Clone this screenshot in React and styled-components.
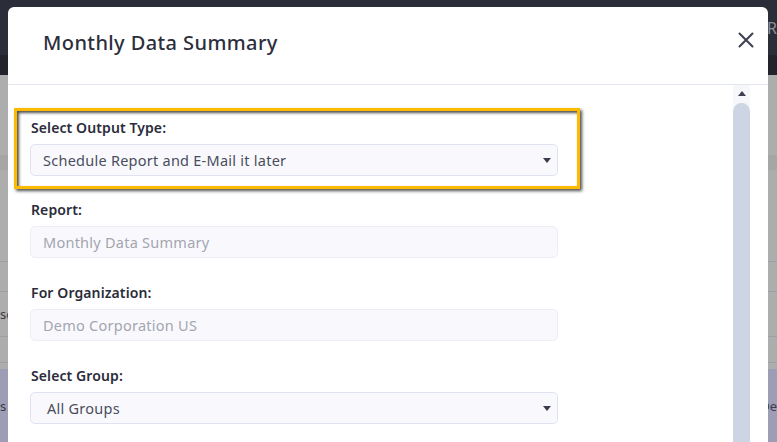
import React from "react";
import styled, { createGlobalStyle } from "styled-components";

const Global = createGlobalStyle`
  html, body { margin: 0; padding: 0; width: 777px; height: 442px; overflow: hidden; }
  body { font-family: "Noto Sans", "Open Sans", sans-serif; }
  * { box-sizing: border-box; }
`;

const Page = styled.div`
  position: relative;
  width: 777px;
  height: 442px;
  overflow: hidden;
  background: #adadad;
  display: flex;
  flex-direction: column;
`;

const TopBar = styled.div`
  height: 75px;
  display: flex;
  flex-direction: column;
  background: #22232b;
`;

const TopBand = styled.div`
  height: 55px;
  background: #2b2d39;
  display: flex;
  justify-content: flex-end;
  align-items: center;
  color: #8d8f9a;
  font-size: 16px;
  font-family: "Noto Sans", sans-serif;
`;

const PageRow = styled.div`
  height: ${(p) => p.h}px;
  background: ${(p) => p.bg || "#adadad"};
  border-bottom: ${(p) => (p.line ? "1px solid #9ea0a8" : "none")};
  display: flex;
  justify-content: space-between;
  align-items: center;
  font-size: 13px;
  color: #3a3b44;
`;

const RowText = styled.span`
  margin-left: ${(p) => p.ml || 0}px;
  margin-right: ${(p) => p.mr || 0}px;
`;

const Modal = styled.div`
  position: absolute;
  left: 8px;
  top: 7px;
  width: 760px;
  height: 460px;
  background: #ffffff;
  border-radius: 6px 6px 0 0;
  display: flex;
  flex-direction: column;
`;

const Header = styled.div`
  height: 78px;
  flex-shrink: 0;
  border-bottom: 1px solid #e3e7ef;
  display: flex;
  align-items: center;
  justify-content: space-between;
  padding: 0 11px 0 35px;
`;

const Title = styled.h2`
  margin: 0;
  margin-top: -6px;
  font-family: "Noto Sans", sans-serif;
  font-weight: 500;
  font-size: 20px;
  color: #2c2e3c;
  letter-spacing: 0.4px;
`;

const CloseButton = styled.button`
  border: 0;
  background: none;
  padding: 0;
  width: 22px;
  height: 22px;
  display: flex;
  align-items: center;
  justify-content: center;
  margin-top: -12px;
  cursor: pointer;
`;

const Body = styled.div`
  flex: 1;
  display: flex;
  min-height: 0;
`;

const Form = styled.div`
  flex: 1;
  padding: 23px 0 0 22px;
  display: flex;
  flex-direction: column;
  align-items: flex-start;
`;

const Highlight = styled.div`
  margin: 0 0 11px -16px;
  padding: 7px 19px 10px 13px;
  border: 3px solid #fcbb00;
  box-shadow: 2px 2px 3px rgba(20, 20, 20, 0.75),
    inset 2px 2px 3px rgba(20, 20, 20, 0.75);
`;

const Field = styled.div`
  width: 528px;
  margin-bottom: ${(p) => (p.last ? 0 : 25)}px;
`;

const Label = styled.div`
  font-size: 14px;
  line-height: 20px;
  font-weight: 600;
  color: #2a2c3a;
  margin: 0 0 6px 1px;
  letter-spacing: 0.1px;
`;

const Box = styled.div`
  height: 32px;
  border: 1px solid ${(p) => (p.select ? "#dfe2f1" : "#eceef5")};
  border-radius: 5px;
  background: #f9f9fd;
  display: flex;
  align-items: center;
  justify-content: space-between;
  padding: 0 6px 0 ${(p) => p.pl || 12}px;
  font-size: 14.5px;
  letter-spacing: 0.25px;
  color: ${(p) => (p.muted ? "#a3a5af" : "#4a4d5c")};
`;

const Caret = styled.span`
  width: 0;
  height: 0;
  border-left: 4px solid transparent;
  border-right: 4px solid transparent;
  border-top: 5px solid #3a3c4c;
  margin-top: 1px;
`;

const Scrollbar = styled.div`
  width: 17px;
  margin-right: 18px;
  background: #f6f7fb;
  display: flex;
  flex-direction: column;
  align-items: center;
`;

const ArrowUp = styled.div`
  width: 0;
  height: 0;
  border-left: 4px solid transparent;
  border-right: 4px solid transparent;
  border-bottom: 5px solid #3c3f4f;
  margin: 6px 0 7px;
`;

const Thumb = styled.div`
  width: 17px;
  flex: 1;
  background: #cdd4e3;
  border-radius: 9px 9px 0 0;
`;

function Select({ value, pl }) {
  return (
    <Box select pl={pl}>
      <span>{value}</span>
      <Caret />
    </Box>
  );
}

export default function App() {
  return (
    <>
      <Global />
      <Page>
        <TopBar>
          <TopBand>
            <RowText mr={0}>R</RowText>
          </TopBand>
        </TopBar>
        <PageRow h={80} />
        <PageRow h={15} bg="#a6a6a7" />
        <PageRow h={92} line />
        <PageRow h={30} line />
        <PageRow h={45} line>
          <RowText ml={0}>sc</RowText>
        </PageRow>
        <PageRow h={26} line />
        <PageRow h={6} />
        <PageRow h={73} bg="#9d9eb6">
          <RowText ml={0}>s</RowText>
          <RowText mr={0}>De</RowText>
        </PageRow>

        <Modal>
          <Header>
            <Title>Monthly Data Summary</Title>
            <CloseButton aria-label="Close">
              <svg width="16" height="16" viewBox="0 0 16 16">
                <path
                  d="M1.5 1.5 L14.5 14.5 M14.5 1.5 L1.5 14.5"
                  stroke="#3c3f4f"
                  strokeWidth="2"
                  strokeLinecap="round"
                />
              </svg>
            </CloseButton>
          </Header>
          <Body>
            <Form>
              <Highlight>
                <Field last>
                  <Label>Select Output Type:</Label>
                  <Select value="Schedule Report and E-Mail it later" />
                </Field>
              </Highlight>
              <Field>
                <Label>Report:</Label>
                <Box muted>Monthly Data Summary</Box>
              </Field>
              <Field>
                <Label>For Organization:</Label>
                <Box muted>Demo Corporation US</Box>
              </Field>
              <Field>
                <Label>Select Group:</Label>
                <Select value="All Groups" pl={16} />
              </Field>
            </Form>
            <Scrollbar>
              <ArrowUp />
              <Thumb />
            </Scrollbar>
          </Body>
        </Modal>
      </Page>
    </>
  );
}
